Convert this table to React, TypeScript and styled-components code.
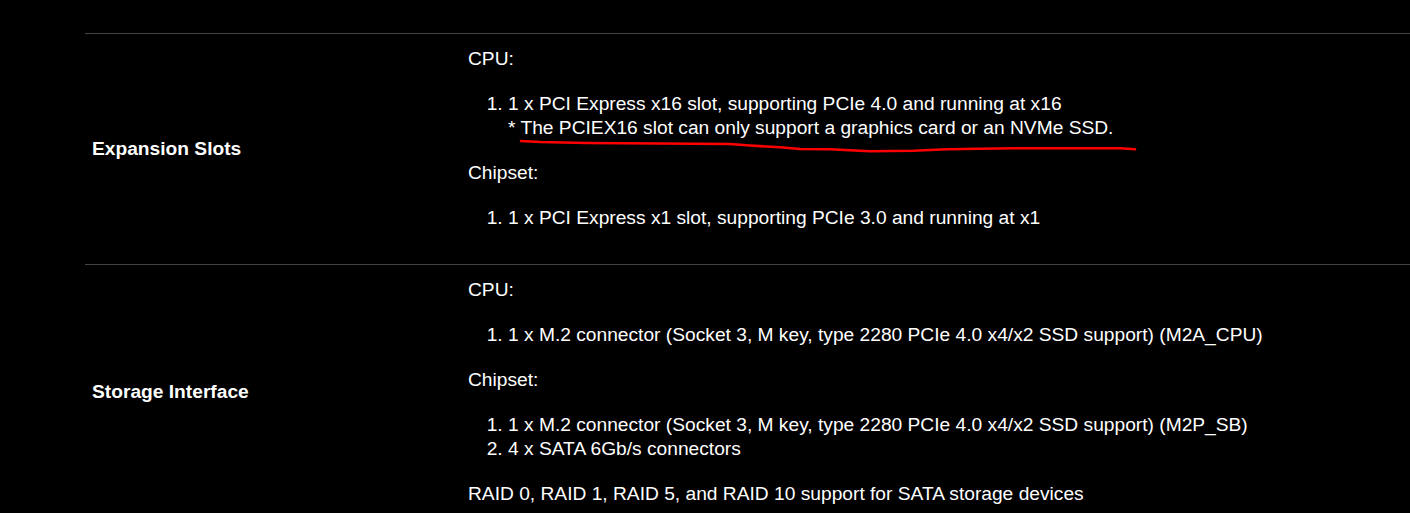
import React from "react";
import styled, { createGlobalStyle } from "styled-components";

const GlobalStyle = createGlobalStyle`
  html, body {
    margin: 0;
    padding: 0;
    background: #000;
  }
  body {
    font-family: "Liberation Sans", Arial, Helvetica, sans-serif;
    font-size: 19.2px;
    line-height: 24px;
    color: #fff;
  }
`;

const Page = styled.div`
  position: relative;
  width: 1410px;
  height: 513px;
  overflow: hidden;
  background: #000;
  padding-top: 33px;
  box-sizing: border-box;
`;

const SpecTable = styled.div`
  margin-left: 85px;
  display: flex;
  flex-direction: column;
`;

const SpecRow = styled.div`
  display: grid;
  grid-template-columns: 376px 1fr;
  border-top: 1px solid #444;
`;

const Label = styled.div`
  display: flex;
  align-items: center;
  padding: 13px 7px 13px;
  font-weight: bold;
  color: #fff;
`;

const Value = styled.div`
  padding: 13px 7px 13px;
  color: #fff;
`;

const Para = styled.p<{ $last?: boolean }>`
  margin: 0 0 ${(p) => (p.$last ? "0" : "21px")};
`;

const List = styled.ol<{ $last?: boolean }>`
  margin: 0 0 ${(p) => (p.$last ? "0" : "21px")};
  padding-left: 40px;
`;

const Item = styled.li``;

const Annotation = styled.svg`
  position: absolute;
  left: 0;
  top: 0;
  pointer-events: none;
`;

export default function App() {
  return (
    <>
      <GlobalStyle />
      <Page>
        <SpecTable>
          <SpecRow>
            <Label>Expansion Slots</Label>
            <Value>
              <Para>CPU:</Para>
              <List>
                <Item>
                  1 x PCI Express x16 slot, supporting PCIe 4.0 and running at x16
                  <br />* The PCIEX16 slot can only support a graphics card or an NVMe SSD.
                </Item>
              </List>
              <Para>Chipset:</Para>
              <List>
                <Item>1 x PCI Express x1 slot, supporting PCIe 3.0 and running at x1</Item>
              </List>
            </Value>
          </SpecRow>
          <SpecRow>
            <Label>Storage Interface</Label>
            <Value>
              <Para>CPU:</Para>
              <List>
                <Item>
                  1 x M.2 connector (Socket 3, M key, type 2280 PCIe 4.0 x4/x2 SSD support) (M2A_CPU)
                </Item>
              </List>
              <Para>Chipset:</Para>
              <List>
                <Item>
                  1 x M.2 connector (Socket 3, M key, type 2280 PCIe 4.0 x4/x2 SSD support) (M2P_SB)
                </Item>
                <Item>4 x SATA 6Gb/s connectors</Item>
              </List>
              <Para $last>RAID 0, RAID 1, RAID 5, and RAID 10 support for SATA storage devices</Para>
            </Value>
          </SpecRow>
        </SpecTable>
        <Annotation width="1410" height="513" viewBox="0 0 1410 513">
          <polyline
            points="521,141 540,142 587,143 730,144 750,145.5 780,147.3 800,149 830,149.3 870,151.3 913,150.7 947,149.3 1013,148.3 1120,148.3 1135,149.3"
            fill="none"
            stroke="#ff0000"
            strokeWidth="2.6"
            strokeLinecap="round"
            strokeLinejoin="round"
          />
        </Annotation>
      </Page>
    </>
  );
}
